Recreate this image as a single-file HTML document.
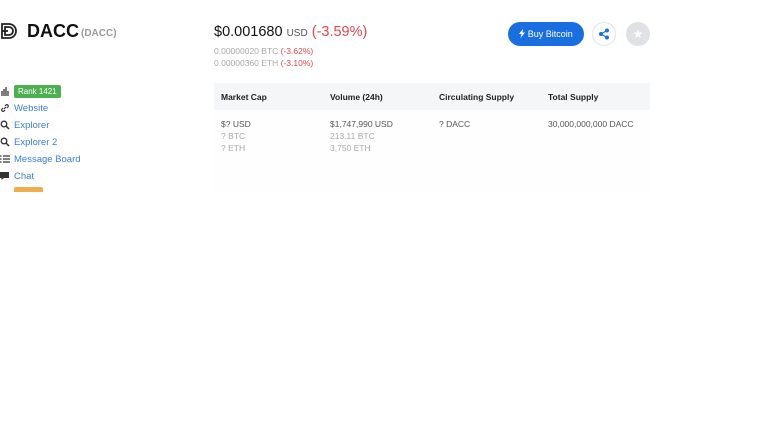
<!DOCTYPE html>
<html><head><meta charset="utf-8"><style>
*{margin:0;padding:0;box-sizing:border-box}
body{width:768px;height:432px;background:#fff;font-family:"Liberation Sans",sans-serif;position:relative;overflow:hidden}
.a{position:absolute;white-space:nowrap}
.side{color:#3b7ddd;font-size:9.5px}
.side div{position:absolute;left:0;height:12px;display:flex;align-items:center}
.side svg{margin-right:4px;flex:none}
.g{color:#a8a8a8}
.r{color:#e0474c}
th{font-size:8.5px;font-weight:bold;color:#222;text-align:left}
</style></head><body>
<svg class="a" style="left:0;top:22px" width="20" height="20" viewBox="0 0 20 20"><path d="M2 2h7a7 7 0 0 1 0 14H2z M5 5h4a4 4 0 0 1 0 8H5z" fill="none" stroke="#222" stroke-width="1.8"/><path d="M2 9h6" stroke="#222" stroke-width="1.8"/></svg>
<div class="a" style="left:27px;top:21px;font-size:18px;font-weight:bold;color:#111">DACC</div>
<div class="a" style="left:81px;top:28px;font-size:10px;color:#999;font-weight:bold">(DACC)</div>

<div class="side">
<div style="top:85px"><svg width="10" height="10" viewBox="0 0 10 10"><path d="M1 9h8M2 8V5M4 8V3M6 8V1M8 8V5" stroke="#333" stroke-width="1.3"/></svg><span style="background:#4caf50;color:#fff;padding:2px 4px;border-radius:2px;font-size:8px">Rank 1421</span></div>
<div style="top:102px"><svg width="10" height="10" viewBox="0 0 10 10"><path d="M4 6L6 4M3 5L1.8 6.2a1.5 1.5 0 0 0 2 2L5 7M5 3l1.2-1.2a1.5 1.5 0 0 1 2 2L7 5" fill="none" stroke="#333" stroke-width="1.2"/></svg>Website</div>
<div style="top:119px"><svg width="10" height="10" viewBox="0 0 10 10"><circle cx="4" cy="4" r="2.8" fill="none" stroke="#333" stroke-width="1.3"/><path d="M6 6l3 3" stroke="#333" stroke-width="1.5"/></svg>Explorer</div>
<div style="top:136px"><svg width="10" height="10" viewBox="0 0 10 10"><circle cx="4" cy="4" r="2.8" fill="none" stroke="#333" stroke-width="1.3"/><path d="M6 6l3 3" stroke="#333" stroke-width="1.5"/></svg>Explorer 2</div>
<div style="top:153px"><svg width="10" height="10" viewBox="0 0 10 10"><path d="M0 2h1.5M0 5h1.5M0 8h1.5M3 2h7M3 5h7M3 8h7" stroke="#333" stroke-width="1.3"/></svg>Message Board</div>
<div style="top:170px"><svg width="10" height="10" viewBox="0 0 10 10"><path d="M0 1h9v6H4L1.5 9V7H0z" fill="#333"/></svg>Chat</div>
</div>
<div class="a" style="left:14px;top:187px;width:29px;height:5px;background:#f0ad4e;border-radius:2px 2px 0 0"></div>

<div class="a" style="left:214px;top:24px;font-size:14.5px;color:#111">$0.001680 <span style="font-size:10px;color:#555">USD</span> <span class="r">(-3.59%)</span></div>
<div class="a g" style="left:214px;top:46px;font-size:8.5px">0.00000020 BTC <span class="r">(-3.62%)</span></div>
<div class="a g" style="left:214px;top:58px;font-size:8.5px">0.00000360 ETH <span class="r">(-3.10%)</span></div>

<div class="a" style="left:508px;top:22px;width:76px;height:24px;background:#1a6fe0;border-radius:12px;color:#fff;font-size:9px;line-height:24px;text-align:center"><svg width="6" height="9" viewBox="0 0 6 9" style="vertical-align:-1px"><path d="M4 0L0 5h2.5L1.5 9 6 3.5H3.5z" fill="#fff"/></svg> Buy Bitcoin</div>
<div class="a" style="left:592px;top:22px;width:24px;height:24px;border:1px solid #e5e5e5;border-radius:50%">
<svg width="22" height="22" viewBox="0 0 22 22"><circle cx="8" cy="11" r="2" fill="#1a6fe0"/><circle cx="14" cy="7.5" r="2" fill="#1a6fe0"/><circle cx="14" cy="14.5" r="2" fill="#1a6fe0"/><path d="M8 11L14 7.5M8 11L14 14.5" stroke="#1a6fe0" stroke-width="1.3"/></svg></div>
<div class="a" style="left:626px;top:22px;width:24px;height:24px;background:#dfe1e5;border-radius:50%;color:#fff;text-align:center;line-height:24px;font-size:12px">★</div>

<div class="a" style="left:214px;top:83px;width:436px;height:108px;background:#fefefe"></div>
<div class="a" style="left:214px;top:83px;width:436px;height:27px;background:#f5f6f7"></div>
<div class="a" style="left:221px;top:92px"><table style="border-collapse:collapse"><tr><th style="width:109px">Market Cap</th><th style="width:109px">Volume (24h)</th><th style="width:109px">Circulating Supply</th><th>Total Supply</th></tr></table></div>
<div class="a" style="left:221px;top:118px;font-size:8.5px;line-height:12px;color:#555">$? USD<br><span class="g">? BTC<br>? ETH</span></div>
<div class="a" style="left:330px;top:118px;font-size:8.5px;line-height:12px;color:#555">$1,747,990 USD<br><span class="g">213.11 BTC<br>3,750 ETH</span></div>
<div class="a" style="left:439px;top:118px;font-size:8.5px;line-height:12px;color:#555">? DACC</div>
<div class="a" style="left:548px;top:118px;font-size:8.5px;line-height:12px;color:#555">30,000,000,000 DACC</div>
</body></html>
